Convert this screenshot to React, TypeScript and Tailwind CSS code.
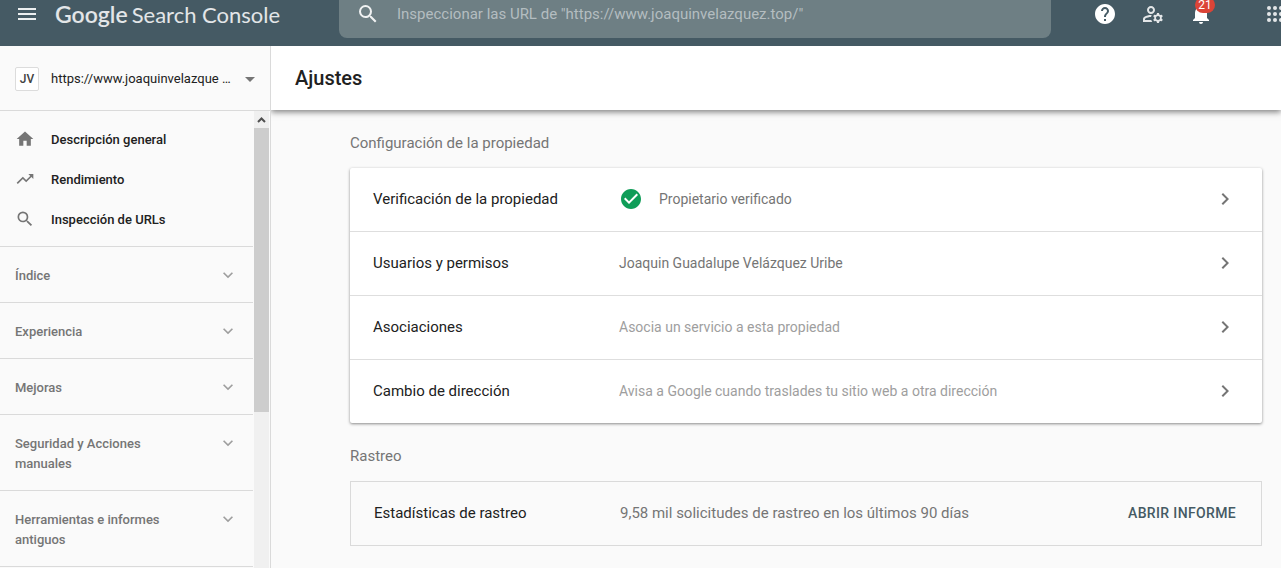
import type { ReactNode } from "react";
import {
  MdCheckCircle,
  MdChevronRight,
  MdArrowDropDown,
  MdExpandMore,
  MdHelp,
  MdHome,
  MdMenu,
  MdNotifications,
  MdOutlineManageAccounts,
  MdSearch,
  MdTrendingUp,
} from "react-icons/md";

const navItems = [
  { label: "Descripción general", icon: <MdHome className="size-5" /> },
  { label: "Rendimiento", icon: <MdTrendingUp className="size-5" /> },
  { label: "Inspección de URLs", icon: <MdSearch className="size-5" /> },
];

const sections = [
  "Índice",
  "Experiencia",
  "Mejoras",
  "Seguridad y Acciones manuales",
  "Herramientas e informes antiguos",
];

const settings: { label: string; value: string; muted?: boolean; icon?: ReactNode }[] = [
  {
    label: "Verificación de la propiedad",
    value: "Propietario verificado",
    icon: <MdCheckCircle className="mr-4 size-6 text-[#0f9d58]" />,
  },
  { label: "Usuarios y permisos", value: "Joaquin Guadalupe Velázquez Uribe" },
  { label: "Asociaciones", value: "Asocia un servicio a esta propiedad", muted: true },
  {
    label: "Cambio de dirección",
    value: "Avisa a Google cuando traslades tu sitio web a otra dirección",
    muted: true,
  },
];

function AppsIcon() {
  return (
    <svg viewBox="0 0 24 24" className="size-6" fill="currentColor" aria-hidden="true">
      {[6, 12, 18].map((y) => [6, 12, 18].map((x) => <circle key={`${x}-${y}`} cx={x} cy={y} r="2" />))}
    </svg>
  );
}

function Header() {
  return (
    <header className="flex h-[46px] shrink-0 overflow-hidden bg-[#455a64] text-white">
      <div className="flex h-7 w-[339px] shrink-0 items-center pl-[15px]">
        <button aria-label="Menú" className="text-white/90">
          <MdMenu className="size-6" />
        </button>
        <a
          href="#"
          className="ml-4 flex items-baseline gap-1 whitespace-nowrap font-['Lato',sans-serif] text-[22px] leading-7 text-white/85"
        >
          <span className="text-[23px] font-semibold">Google</span>
          <span>Search Console</span>
        </a>
      </div>
      <label className="flex h-[38px] min-w-0 flex-1 items-center rounded-b-lg bg-[#6e7f84] pb-[10px] pl-[17px]">
        <MdSearch className="size-6 shrink-0 text-white/90" />
        <input
          type="search"
          aria-label="Inspeccionar URL"
          placeholder={'Inspeccionar las URL de "https://www.joaquinvelazquez.top/"'}
          className="ml-[17px] h-6 min-w-0 flex-1 bg-transparent text-[15px] leading-6 outline-none placeholder:text-[#b4bdc0]"
        />
      </label>
      <div className="-mr-[6px] ml-[42px] flex h-7 shrink-0 items-center">
        <button aria-label="Ayuda">
          <MdHelp className="size-6" />
        </button>
        <button aria-label="Usuarios" className="ml-6 text-white/85">
          <MdOutlineManageAccounts className="size-6" />
        </button>
        <button aria-label="Notificaciones" className="relative ml-6">
          <MdNotifications className="size-6" />
          <span className="absolute -top-[5px] left-[6px] flex h-4 w-5 items-center justify-center rounded-full bg-[#db4437] text-xs leading-[10px]">
            21
          </span>
        </button>
        <button aria-label="Aplicaciones" className="ml-[50px] text-white/85">
          <AppsIcon />
        </button>
      </div>
    </header>
  );
}

function Sidebar() {
  return (
    <aside className="flex w-[271px] shrink-0 flex-col border-r border-[#dadada]">
      <button className="flex h-[65px] shrink-0 items-center border-b border-[#dadada] pl-[15px] pr-2 pt-px text-left">
        <span className="flex size-6 items-center justify-center rounded-xs border border-[#dcdcdc] bg-white text-xs font-medium text-[#424242]">
          JV
        </span>
        <span className="ml-3 flex-1 whitespace-nowrap text-[13px] leading-5 text-[#212121]">
          https://www.joaquinvelazque …
        </span>
        <MdArrowDropDown className="size-6 text-[#757575]" />
      </button>
      <div className="flex min-h-0 flex-1 gap-px">
        <nav className="min-w-0 flex-1 overflow-hidden">
          <ul className="pb-[6px] pt-[9px]">
            {navItems.map((item) => (
              <li key={item.label}>
                <a href="#" className="flex h-10 items-center pl-[15px] text-[13px] font-medium text-[#212121]">
                  <span className="mr-4 pb-[2px] text-[#757575]">{item.icon}</span>
                  {item.label}
                </a>
              </li>
            ))}
          </ul>
          {sections.map((label) => (
            <button
              key={label}
              className="flex w-full items-start justify-between border-t border-[#dadada] pb-4 pl-[15px] pr-[15px] pt-[18px] text-left"
            >
              <span className="w-[150px] pt-px text-[13px] font-medium leading-5 text-[#757575]">{label}</span>
              <MdExpandMore className="size-5 text-[#9e9e9e]" />
            </button>
          ))}
          <div className="border-t border-[#dadada]" />
        </nav>
        <div className="mr-px flex w-[15px] flex-col bg-[#f0f0f0]" aria-hidden="true">
          <svg viewBox="0 0 15 17" className="h-[17px] w-[15px] shrink-0">
            <path d="M4 11 7.5 7.5 11 11" fill="none" stroke="#505050" strokeWidth="2" />
          </svg>
          <div className="h-[284px] bg-[#cdcdcd]" />
        </div>
      </div>
    </aside>
  );
}

export default function App() {
  return (
    <div className="flex h-screen flex-col overflow-hidden bg-[#fafafa] font-['Roboto',sans-serif]">
      <Header />
      <div className="flex min-h-0 flex-1">
        <Sidebar />
        <main className="min-w-0 flex-1 overflow-hidden">
          <div className="flex h-16 items-center bg-white pl-6 shadow-[0_2px_6px_rgba(0,0,0,0.5)]">
            <h1 className="text-xl font-medium text-[#212121]">Ajustes</h1>
          </div>
          <div className="pl-[79px] pr-[19px] pt-[21px]">
            <h2 className="text-[15px] leading-6 text-[#757575]">Configuración de la propiedad</h2>
            <ul className="mt-[13px] divide-y divide-[#dedede] rounded-xs bg-white shadow-[0_1px_3px_rgba(0,0,0,0.45)]">
              {settings.map((row) => (
                <li key={row.label}>
                  <a href="#" className="flex h-[63px] items-center pb-px pl-[23px] pr-[25px] leading-6">
                    <span className="w-[246px] shrink-0 text-[15px] text-[#212121]">{row.label}</span>
                    <span
                      className={
                        row.muted
                          ? "flex flex-1 items-center text-[14px] text-[#9e9e9e]"
                          : "flex flex-1 items-center text-[14px] text-[#757575]"
                      }
                    >
                      {row.icon}
                      {row.value}
                    </span>
                    <MdChevronRight className="size-6 text-[#757575]" />
                  </a>
                </li>
              ))}
            </ul>
            <h2 className="mt-[21px] text-[15px] leading-6 text-[#757575]">Rastreo</h2>
            <div className="mt-[13px] flex h-[65px] items-center border border-[#dadada] pb-px pl-[23px] pr-[25px] text-[15px] leading-6">
              <span className="w-[246px] shrink-0 text-[#212121]">Estadísticas de rastreo</span>
              <span className="flex-1 text-[#757575]">9,58 mil solicitudes de rastreo en los últimos 90 días</span>
              <button className="text-[14px] font-medium uppercase tracking-wide text-[#455a64]">Abrir informe</button>
            </div>
          </div>
        </main>
      </div>
    </div>
  );
}
